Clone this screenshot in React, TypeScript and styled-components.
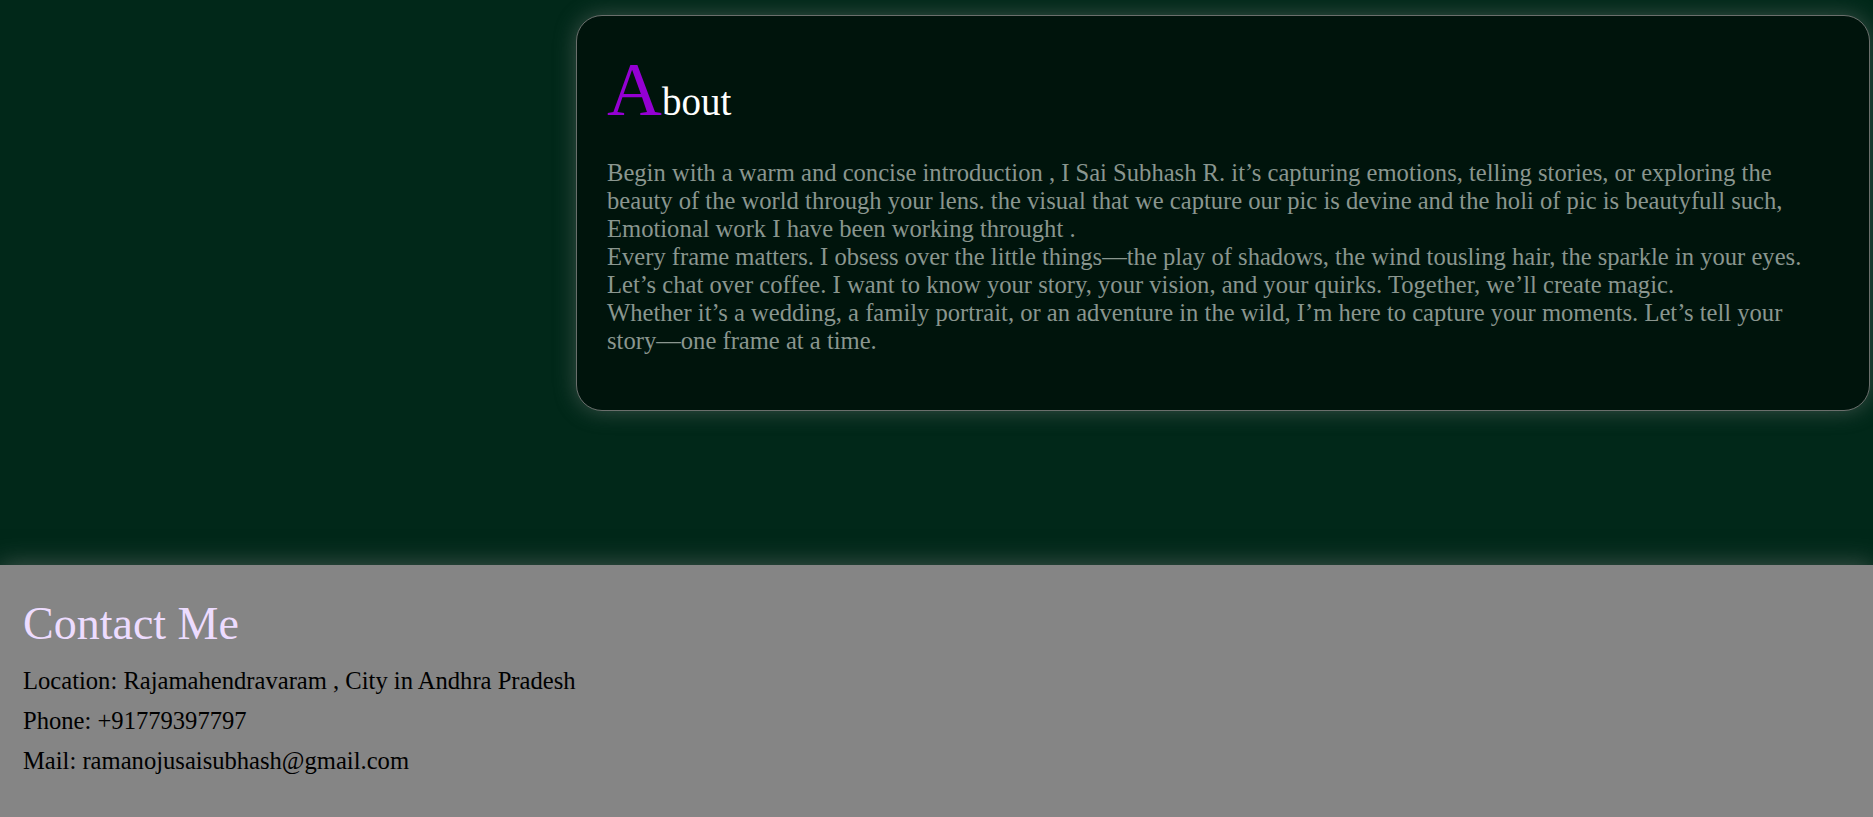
import React from "react";
import styled, { createGlobalStyle } from "styled-components";

const GlobalStyle = createGlobalStyle`
  html, body {
    margin: 0;
    padding: 0;
    background: #858585;
  }
  body {
    font-family: "Liberation Serif", "Times New Roman", serif;
  }
`;

const Page = styled.div`
  display: flex;
  flex-direction: column;
  min-height: 817px;
`;

const Hero = styled.section`
  display: flex;
  align-items: flex-start;
  height: 565px;
  box-sizing: border-box;
  padding: 15px 3px 0 0;
  background: #012819;
`;

const PhotoColumn = styled.div`
  flex: 0 0 576px;
`;

const AboutCard = styled.article`
  flex: 1;
  box-sizing: border-box;
  padding: 30px;
  border: 1px solid #6a6f6c;
  border-radius: 26px;
  background: #00140c;
  box-shadow: 0 0 22px rgba(128, 128, 128, 0.45);
`;

const AboutTitle = styled.h2`
  margin: 0;
  font-size: 39px;
  font-weight: normal;
  color: #ffffff;
`;

const Initial = styled.span`
  font-size: 76px;
  color: #9400d3;
`;

const AboutText = styled.p`
  margin: 26px 0 25px;
  font-size: 24.6px;
  color: #8a968f;
`;

const NoBreak = styled.span`
  white-space: nowrap;
`;

const Contact = styled.section`
  position: relative;
  flex: 1;
  display: flex;
  flex-direction: column;
  gap: 12px;
  padding: 32px 23px 30px;
  background: #858585;
  box-shadow: 0 0 24px rgba(128, 128, 128, 0.55);
`;

const ContactTitle = styled.h2`
  margin: 0 0 5px;
  font-size: 46px;
  font-weight: normal;
  color: #eddcff;
`;

const ContactLine = styled.p`
  margin: 0;
  font-size: 24.6px;
  color: #000000;
`;

export default function App() {
  return (
    <Page>
      <GlobalStyle />
      <Hero>
        <PhotoColumn />
        <AboutCard>
          <AboutTitle>
            <Initial>A</Initial>bout
          </AboutTitle>
          <AboutText>
            Begin with a warm and concise introduction , I Sai Subhash R. it’s capturing emotions, telling stories, or exploring the beauty of the world through your lens. the visual that we capture our pic is devine and the holi of pic is beautyfull such, Emotional work I have been working throught .
            <br />
            Every frame matters. I obsess over the little things—the play of shadows, the wind tousling hair, the sparkle in your eyes.
            <br />
            Let’s chat over coffee. I want to know your story, your vision, and your quirks. Together, we’ll create magic.
            <br />
            Whether it’s a wedding, a family portrait, or an adventure in the wild, I’m here to capture your moments. Let’s tell your <NoBreak>story—one</NoBreak> frame at a time.
          </AboutText>
        </AboutCard>
      </Hero>
      <Contact>
        <ContactTitle>Contact Me</ContactTitle>
        <ContactLine>Location: Rajamahendravaram , City in Andhra Pradesh</ContactLine>
        <ContactLine>Phone: +91779397797</ContactLine>
        <ContactLine>Mail: ramanojusaisubhash@gmail.com</ContactLine>
      </Contact>
    </Page>
  );
}
